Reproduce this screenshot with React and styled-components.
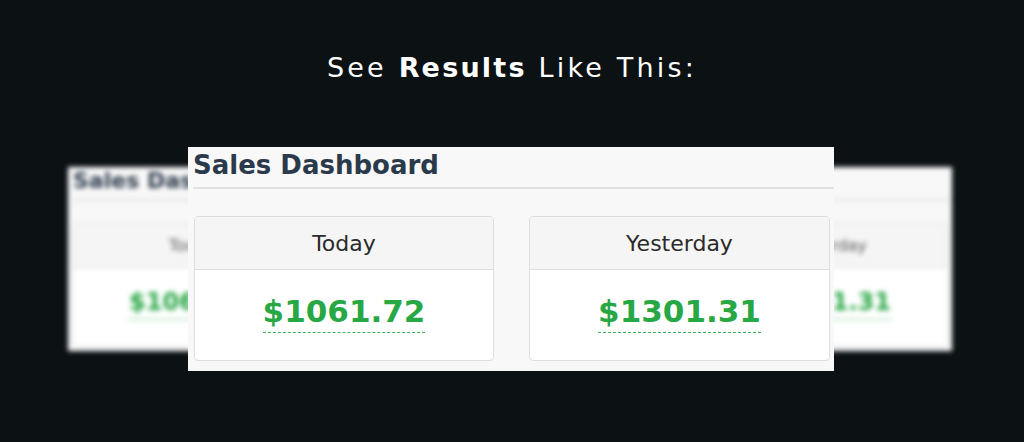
import React from "react";
import styled, { createGlobalStyle } from "styled-components";

const GlobalStyle = createGlobalStyle`
  html, body {
    margin: 0;
    padding: 0;
    background: #0c1114;
  }
  * {
    box-sizing: border-box;
  }
`;

const Page = styled.div`
  width: 1024px;
  height: 442px;
  overflow: hidden;
  background: #0c1114;
  padding-top: 52px;
  display: flex;
  flex-direction: column;
  align-items: center;
`;

const Heading = styled.h2`
  margin: 0;
  font-family: "DejaVu Sans", "Open Sans", sans-serif;
  font-size: 27px;
  line-height: 32px;
  font-weight: 400;
  color: #ffffff;
  letter-spacing: 3.2px;
  b {
    font-weight: 700;
    letter-spacing: 2.2px;
  }
`;

const Stage = styled.div`
  margin-top: 63px;
  display: grid;
  width: 100%;
  justify-items: center;
  align-items: start;
`;

const BackCard = styled.div`
  grid-area: 1 / 1;
  margin-top: 20px;
  margin-left: -4px;
  width: 884px;
  height: 184px;
  padding: 1px 4px 4px 4px;
  background: #f8f8f8;
  filter: blur(2.4px);
`;

const FrontCard = styled.div`
  grid-area: 1 / 1;
  z-index: 1;
  margin-left: -2px;
  width: 646px;
  padding: 3px 4px 10px 6px;
  background: #f8f8f8;
`;

const Title = styled.h3`
  margin: 0 -4px 0 ${(p) => (p.$small ? "1px" : "-1px")};
  font-family: "DejaVu Sans", Verdana, sans-serif;
  font-weight: 700;
  font-size: ${(p) => (p.$small ? "22px" : "26px")};
  line-height: ${(p) => (p.$small ? "26px" : "30px")};
  padding-bottom: ${(p) => (p.$small ? "5px" : "7px")};
  color: #2b3a4b;
  border-bottom: 2px solid #e2e2e2;
  white-space: nowrap;
`;

const Boxes = styled.div`
  display: grid;
  grid-template-columns: ${(p) => (p.$small ? "240px 240px" : "300px 301px")};
  justify-content: space-between;
  margin-top: ${(p) => (p.$small ? "22px" : "27px")};
`;

const Box = styled.div`
  border: 1px solid #dedede;
  border-radius: 4px;
  overflow: hidden;
  background: #ffffff;
`;

const BoxHead = styled.div`
  height: ${(p) => (p.$small ? "44px" : "53px")};
  line-height: ${(p) => (p.$small ? "44px" : "53px")};
  background: #f5f5f5;
  border-bottom: 1px solid #dedede;
  text-align: center;
  font-family: "DejaVu Sans", Verdana, sans-serif;
  font-size: ${(p) => (p.$small ? "16px" : "22px")};
  color: ${(p) => (p.$small ? "#555" : "#2a2a2a")};
`;

const BoxBody = styled.div`
  height: ${(p) => (p.$small ? "78px" : "90px")};
  padding-top: ${(p) => (p.$small ? "19px" : "22px")};
  text-align: center;
  line-height: ${(p) => (p.$small ? "30px" : "38px")};
`;

const Amount = styled.span`
  font-family: "DejaVu Sans", Verdana, sans-serif;
  font-weight: 700;
  font-size: ${(p) => (p.$small ? "24px" : "31px")};
  color: #28a745;
  padding-bottom: 3px;
  border-bottom: 1px dashed #3bb35a;
`;

const stats = [
  { label: "Today", value: "$1061.72" },
  { label: "Yesterday", value: "$1301.31" },
];

const Dashboard = ({ small }) => (
  <>
    <Title $small={small}>Sales Dashboard</Title>
    <Boxes $small={small}>
      {stats.map((s) => (
        <Box key={s.label}>
          <BoxHead $small={small}>{s.label}</BoxHead>
          <BoxBody $small={small}>
            <Amount $small={small}>{s.value}</Amount>
          </BoxBody>
        </Box>
      ))}
    </Boxes>
  </>
);

export default function App() {
  return (
    <>
      <GlobalStyle />
      <Page>
        <Heading>
          See <b>Results</b> Like This:
        </Heading>
        <Stage>
          <BackCard>
            <Dashboard small />
          </BackCard>
          <FrontCard>
            <Dashboard />
          </FrontCard>
        </Stage>
      </Page>
    </>
  );
}
